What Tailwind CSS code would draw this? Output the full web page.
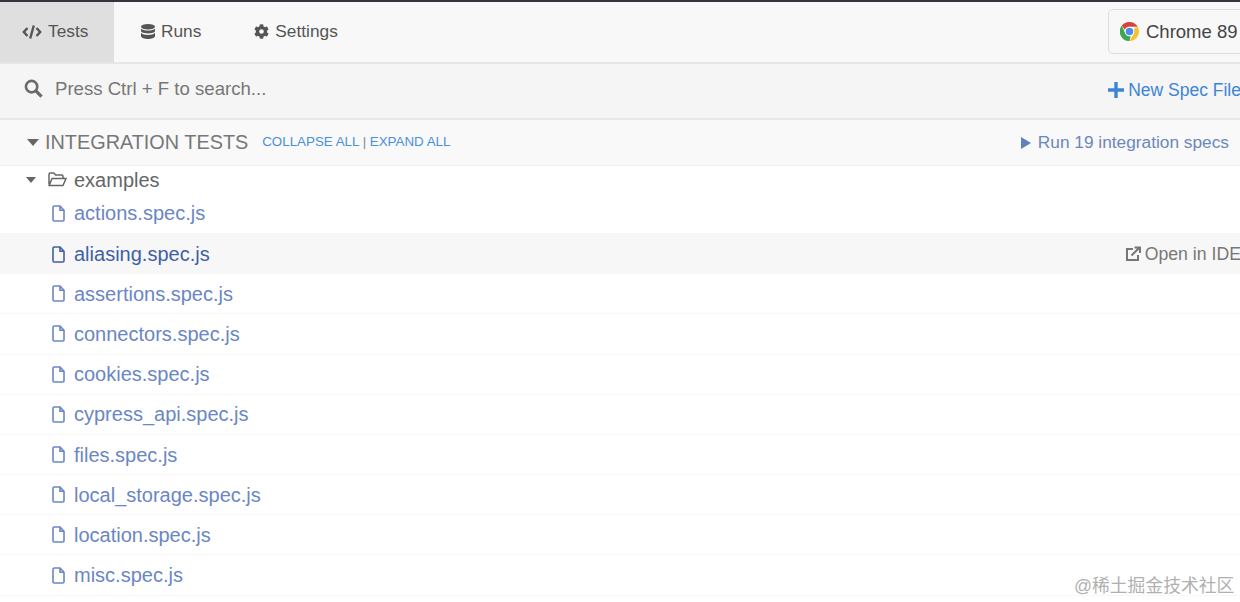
<!DOCTYPE html>
<html lang="en">
  <head>
    <meta charset="UTF-8" />
    <title>Cypress Tests</title>
    <script src="https://cdn.jsdelivr.net/npm/@tailwindcss/browser@4"></script>
  </head>
  <body class="font-['Liberation_Sans',Arial,sans-serif] bg-white overflow-hidden h-[602px] relative">
    <div class="h-[2px] bg-[#33363c]"></div>

    <!-- top nav -->
    <nav class="h-[60px] bg-[#f8f8f8] flex text-[17.300px] text-[#555] relative">
      <a class="w-[114px] bg-[#dfdfdf] flex items-center pl-[22px] gap-[6px]">
        <svg class="w-[20px] h-[16px]" viewBox="0 0 20 16" fill="none" stroke="#555" stroke-width="2.400"><path d="M5.500 4 1.800 8l3.700 4M14.500 4l3.700 4-3.700 4M11.800 1.500 8.200 14.500"/></svg>
        Tests
      </a>
      <a class="flex items-center ml-[27px] gap-[6px]">
        <svg class="w-[14px] h-[15px] mb-[2px]" viewBox="0 0 14 15" fill="#555"><ellipse cx="7" cy="2.800" rx="7" ry="2.800"/><path d="M0 4.400C1 5.800 4 6.500 7 6.500s6-.7 7-2.100v2.700C14 8.600 10.500 9.500 7 9.500S0 8.600 0 7.100zM0 8.800c1 1.400 4 2.200 7 2.200s6-.8 7-2.200v3.400c0 1.600-3.500 2.800-7 2.800s-7-1.200-7-2.800z"/></svg>
        Runs
      </a>
      <a class="flex items-center ml-[53px] gap-[6px]">
        <svg class="w-[15px] h-[15px] mb-[2px]" viewBox="0 0 512 512" fill="#555"><path d="M487 316l-42-25a190 190 0 0 0 0-70l42-25c5-3 7-8 6-14a248 248 0 0 0-55-95c-4-4-10-5-15-2l-42 24a190 190 0 0 0-61-35V26c0-6-4-11-9-12a250 250 0 0 0-110 0c-5 1-9 6-9 12v48a190 190 0 0 0-61 35L89 85c-5-3-11-2-15 2a247 247 0 0 0-55 95c-2 6 1 11 6 14l42 25a190 190 0 0 0 0 70l-42 25c-5 3-7 8-6 14a248 248 0 0 0 55 95c4 4 10 5 15 2l42-24a190 190 0 0 0 61 35v48c0 6 4 11 9 12a250 250 0 0 0 110 0c5-1 9-6 9-12v-48a190 190 0 0 0 61-35l42 24c5 3 11 2 15-2a247 247 0 0 0 55-95c2-6-1-11-6-14zM256 336a80 80 0 1 1 0-160 80 80 0 0 1 0 160z"/></svg>
        Settings
      </a>
      <div class="absolute left-[1108px] top-[7px] w-[150px] h-[45px] border border-[#ddd] rounded-[5px] bg-[#f8f8f8] flex items-center pl-[11px] gap-[7px] text-[18.500px] text-[#444]">
        <svg class="w-[19px] h-[19px] shrink-0" viewBox="4 4 40 40">
          <path fill="#d8433a" d="M24 4a20 20 0 0 1 17.300 10H24a10 10 0 0 0-9.500 6.800L7.900 11.500A20 20 0 0 1 24 4z"/>
          <path fill="#f6c32d" d="M41.300 14A20 20 0 0 1 24 44l8.700-15a10 10 0 0 0-.2-10z"/>
          <path fill="#3fa652" d="M24 44A20 20 0 0 1 7.900 11.500L15.500 29a10 10 0 0 0 11 4.500z"/>
          <circle cx="24" cy="24" r="10" fill="#fff"/>
          <circle cx="24" cy="24" r="8" fill="#4d8bf0"/>
        </svg>
        Chrome 89
      </div>
    </nav>
    <div class="h-[2px] bg-[#e6e6e6]"></div>

    <!-- search -->
    <div class="h-[54px] bg-[#f5f5f5] flex items-center justify-between text-[#777]">
      <div class="flex items-center pl-[24px] gap-[12px] text-[18.600px] pb-[4px]">
        <svg class="w-[19px] h-[19px]" viewBox="0 0 20 20" fill="none" stroke="#6b6b6b"><circle cx="8" cy="8" r="6" stroke-width="2.800"/><path d="m12.500 12.500 6 6" stroke-width="3.400"/></svg>
        Press Ctrl + F to search...
      </div>
      <div class="flex items-center gap-[4px] text-[17.500px] text-[#3d84d6] whitespace-nowrap -mr-[1px] pb-[2px]">
        <svg class="w-[16px] h-[16px]" viewBox="0 0 16 16" fill="#3d84d6"><path d="M6.300 0h3.400v6.300H16v3.400H9.700V16H6.300V9.700H0V6.300h6.300z"/></svg>
        New Spec File
      </div>
    </div>
    <div class="h-[2px] bg-[#e8e8e8]"></div>

    <!-- integration header -->
    <div class="h-[46px] bg-[#f9f9f9] border-b border-[#f0f0f0] flex items-center justify-between pl-[27px] pr-[11px]">
      <div class="flex items-center">
        <span class="w-0 h-0 border-x-[6px] border-x-transparent border-t-[7px] border-t-[#666] mr-[6px]"></span>
        <span class="text-[19.850px] text-[#777]">INTEGRATION TESTS</span>
        <span class="ml-[14px] text-[13.350px] text-[#4a90d9]">COLLAPSE ALL <span class="text-[#888]">|</span> EXPAND ALL</span>
      </div>
      <div class="flex items-center gap-[7px] text-[17.300px] text-[#6b87bd]">
        <span class="w-0 h-0 border-y-[6px] border-y-transparent border-l-[10px] border-l-[#5f7fbe]"></span>
        Run 19 integration specs
      </div>
    </div>

    <!-- folder -->
    <div class="h-[27.800px] flex items-center pl-[26px] text-[20px] text-[#666]">
      <span class="w-0 h-0 border-x-[5.500px] border-x-transparent border-t-[6px] border-t-[#666]"></span>
      <svg class="w-[19px] h-[15px] ml-[12px]" viewBox="0 0 19 15" fill="none" stroke="#666" stroke-width="1.500"><path d="M1 12.500V2.500C1 1.700 1.500 1 2.300 1h3.400l2 2h6c.8 0 1.300.6 1.300 1.300V6M1.200 13.500 4 6.500h14l-3 7z"/></svg>
      <span class="ml-[7px]">examples</span>
    </div>

    <!-- specs -->
    <ul class="text-[20px] text-[#6a86c4]">
      <li class="h-[40.200px] flex items-center pl-[52px] border-b border-[#f7f7f7]">
        <svg class="w-[13px] h-[17px] mr-[9px]" viewBox="0 0 13 17" fill="none" stroke="currentColor" stroke-width="1.600"><path d="M1 2.300c0-.7.6-1.300 1.300-1.300H8l4 4.200v9.500c0 .7-.6 1.300-1.300 1.300H2.300c-.7 0-1.300-.6-1.300-1.300zM8 1v4.200h4"/></svg>
        actions.spec.js
      </li>
      <li class="h-[40.200px] flex items-center pl-[52px] bg-[#f7f7f7] text-[#3f5fa6] justify-between">
        <span class="flex items-center">
          <svg class="w-[13px] h-[17px] mr-[9px]" viewBox="0 0 13 17" fill="none" stroke="currentColor" stroke-width="1.600"><path d="M1 2.300c0-.7.6-1.300 1.300-1.300H8l4 4.200v9.500c0 .7-.6 1.300-1.300 1.300H2.300c-.7 0-1.300-.6-1.300-1.300zM8 1v4.200h4"/></svg>
          aliasing.spec.js
        </span>
        <span class="flex items-center gap-[4px] text-[17.700px] text-[#777] -mr-[1px] whitespace-nowrap">
          <svg class="w-[16px] h-[16px]" viewBox="0 0 16 16" fill="none" stroke="#777" stroke-width="2"><path d="M8 3H2v11h11V9M6.500 9.500 14 2M9.500 1.500H15V7"/></svg>
          Open in IDE
        </span>
      </li>
      <li class="h-[40.200px] flex items-center pl-[52px] border-b border-[#f7f7f7]">
        <svg class="w-[13px] h-[17px] mr-[9px]" viewBox="0 0 13 17" fill="none" stroke="currentColor" stroke-width="1.600"><path d="M1 2.300c0-.7.6-1.300 1.300-1.300H8l4 4.200v9.500c0 .7-.6 1.300-1.300 1.300H2.300c-.7 0-1.300-.6-1.300-1.300zM8 1v4.200h4"/></svg>
        assertions.spec.js
      </li>
      <li class="h-[40.200px] flex items-center pl-[52px] border-b border-[#f7f7f7]">
        <svg class="w-[13px] h-[17px] mr-[9px]" viewBox="0 0 13 17" fill="none" stroke="currentColor" stroke-width="1.600"><path d="M1 2.300c0-.7.6-1.300 1.300-1.300H8l4 4.200v9.500c0 .7-.6 1.300-1.300 1.300H2.300c-.7 0-1.300-.6-1.300-1.300zM8 1v4.200h4"/></svg>
        connectors.spec.js
      </li>
      <li class="h-[40.200px] flex items-center pl-[52px] border-b border-[#f7f7f7]">
        <svg class="w-[13px] h-[17px] mr-[9px]" viewBox="0 0 13 17" fill="none" stroke="currentColor" stroke-width="1.600"><path d="M1 2.300c0-.7.6-1.300 1.300-1.300H8l4 4.200v9.500c0 .7-.6 1.300-1.300 1.300H2.300c-.7 0-1.300-.6-1.300-1.300zM8 1v4.200h4"/></svg>
        cookies.spec.js
      </li>
      <li class="h-[40.200px] flex items-center pl-[52px] border-b border-[#f7f7f7]">
        <svg class="w-[13px] h-[17px] mr-[9px]" viewBox="0 0 13 17" fill="none" stroke="currentColor" stroke-width="1.600"><path d="M1 2.300c0-.7.6-1.300 1.300-1.300H8l4 4.200v9.500c0 .7-.6 1.300-1.300 1.300H2.300c-.7 0-1.300-.6-1.300-1.300zM8 1v4.200h4"/></svg>
        cypress_api.spec.js
      </li>
      <li class="h-[40.200px] flex items-center pl-[52px] border-b border-[#f7f7f7]">
        <svg class="w-[13px] h-[17px] mr-[9px]" viewBox="0 0 13 17" fill="none" stroke="currentColor" stroke-width="1.600"><path d="M1 2.300c0-.7.6-1.300 1.300-1.300H8l4 4.200v9.500c0 .7-.6 1.300-1.300 1.300H2.300c-.7 0-1.300-.6-1.300-1.300zM8 1v4.200h4"/></svg>
        files.spec.js
      </li>
      <li class="h-[40.200px] flex items-center pl-[52px] border-b border-[#f7f7f7]">
        <svg class="w-[13px] h-[17px] mr-[9px]" viewBox="0 0 13 17" fill="none" stroke="currentColor" stroke-width="1.600"><path d="M1 2.300c0-.7.6-1.300 1.300-1.300H8l4 4.200v9.500c0 .7-.6 1.300-1.300 1.300H2.300c-.7 0-1.300-.6-1.300-1.300zM8 1v4.200h4"/></svg>
        local_storage.spec.js
      </li>
      <li class="h-[40.200px] flex items-center pl-[52px] border-b border-[#f7f7f7]">
        <svg class="w-[13px] h-[17px] mr-[9px]" viewBox="0 0 13 17" fill="none" stroke="currentColor" stroke-width="1.600"><path d="M1 2.300c0-.7.6-1.300 1.300-1.300H8l4 4.200v9.500c0 .7-.6 1.300-1.300 1.300H2.300c-.7 0-1.300-.6-1.300-1.300zM8 1v4.200h4"/></svg>
        location.spec.js
      </li>
      <li class="h-[40.200px] flex items-center pl-[52px] border-b border-[#f7f7f7]">
        <svg class="w-[13px] h-[17px] mr-[9px]" viewBox="0 0 13 17" fill="none" stroke="currentColor" stroke-width="1.600"><path d="M1 2.300c0-.7.6-1.300 1.300-1.300H8l4 4.200v9.500c0 .7-.6 1.300-1.300 1.300H2.300c-.7 0-1.300-.6-1.300-1.300zM8 1v4.200h4"/></svg>
        misc.spec.js
      </li>
    </ul>

    <!-- watermark -->
    <div class="absolute left-[1074px] top-[575px] text-[17.800px] leading-[22px] text-[#b0b0b0] whitespace-nowrap font-['Liberation_Sans','Noto_Sans_CJK_SC',sans-serif]">@稀土掘金技术社区</div>
  </body>
</html>
